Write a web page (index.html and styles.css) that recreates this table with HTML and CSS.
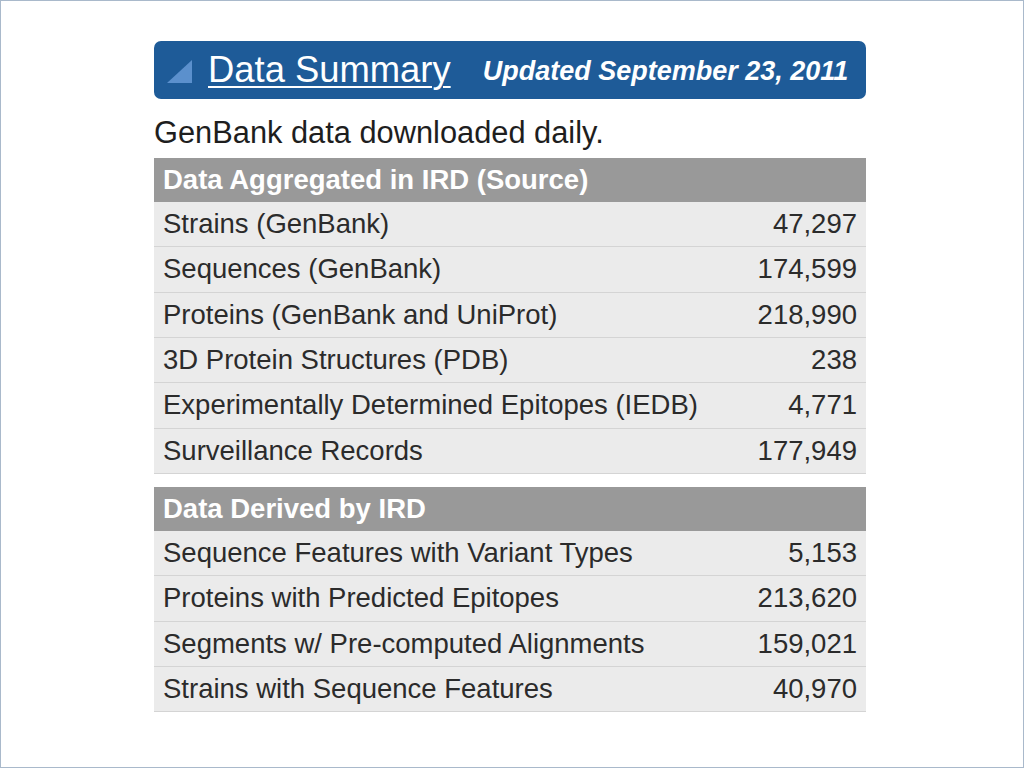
FILE: index.html
```html
<!DOCTYPE html>
<html lang="en">
<head>
<meta charset="utf-8">
<title>Data Summary</title>
<link rel="stylesheet" href="styles.css">
</head>
<body>
<div class="frame">
  <div class="panel">
    <div class="banner">
      <svg class="tri" width="25" height="24" viewBox="0 0 25 24"><polygon points="0,23 25,23 25,0" fill="#5b90cd"/></svg>
      <a class="title" href="#">Data Summary</a>
      <span class="updated">Updated September 23, 2011</span>
    </div>
    <p class="note">GenBank data downloaded daily.</p>
    <table class="stats">
      <thead><tr><th colspan="2">Data Aggregated in IRD (Source)</th></tr></thead>
      <tbody>
        <tr><td>Strains (GenBank)</td><td class="num">47,297</td></tr>
        <tr><td>Sequences (GenBank)</td><td class="num">174,599</td></tr>
        <tr><td>Proteins (GenBank and UniProt)</td><td class="num">218,990</td></tr>
        <tr><td>3D Protein Structures (PDB)</td><td class="num">238</td></tr>
        <tr><td>Experimentally Determined Epitopes (IEDB)</td><td class="num">4,771</td></tr>
        <tr><td>Surveillance Records</td><td class="num">177,949</td></tr>
      </tbody>
    </table>
    <table class="stats">
      <thead><tr><th colspan="2">Data Derived by IRD</th></tr></thead>
      <tbody>
        <tr><td>Sequence Features with Variant Types</td><td class="num">5,153</td></tr>
        <tr><td>Proteins with Predicted Epitopes</td><td class="num">213,620</td></tr>
        <tr><td>Segments w/ Pre-computed Alignments</td><td class="num">159,021</td></tr>
        <tr><td>Strains with Sequence Features</td><td class="num">40,970</td></tr>
      </tbody>
    </table>
  </div>
</div>
</body>
</html>
```
FILE: styles.css
```css
html, body {
  margin: 0;
  padding: 0;
  background: #ffffff;
}
body {
  font-family: "Liberation Sans", Arial, Helvetica, sans-serif;
  color: #2b2b2b;
}
.frame {
  box-sizing: border-box;
  width: 1024px;
  height: 768px;
  border: 1px solid #a9b9cb;
  padding-top: 40px;
}
.panel {
  width: 712px;
  margin-left: 153px;
}
.banner {
  height: 58px;
  box-sizing: border-box;
  background: #1e5b98;
  border-radius: 7px;
  display: flex;
  align-items: center;
  padding-left: 13px;
  color: #ffffff;
}
.tri {
  display: block;
  flex: none;
  margin-top: 3px;
}
.title {
  margin-left: 16px;
  font-size: 36.4px;
  color: #ffffff;
  text-decoration: underline;
  text-decoration-thickness: 2px;
  text-underline-offset: 4px;
  line-height: 40px;
}
.updated {
  margin-left: 32px;
  font-size: 27px;
  font-weight: bold;
  font-style: italic;
  line-height: 30px;
  margin-top: 2px;
}
.note {
  margin: 0;
  padding-top: 17px;
  margin-bottom: 8px;
  font-size: 30.8px;
  line-height: 34px;
  color: #1e1e1e;
}
.stats {
  width: 100%;
  border-collapse: collapse;
  font-size: 27.5px;
}
.stats + .stats {
  margin-top: 13px;
}
.stats th {
  background: #999999;
  color: #ffffff;
  font-weight: bold;
  text-align: left;
  height: 44px;
  padding: 0 9px;
  line-height: 44px;
}
.stats td {
  background: #ebebeb;
  height: 44.33px;
  line-height: 44px;
  padding: 0 9px;
  border-bottom: 1px solid #d4d4d4;
  white-space: nowrap;
}
.stats td.num {
  text-align: right;
}
```
